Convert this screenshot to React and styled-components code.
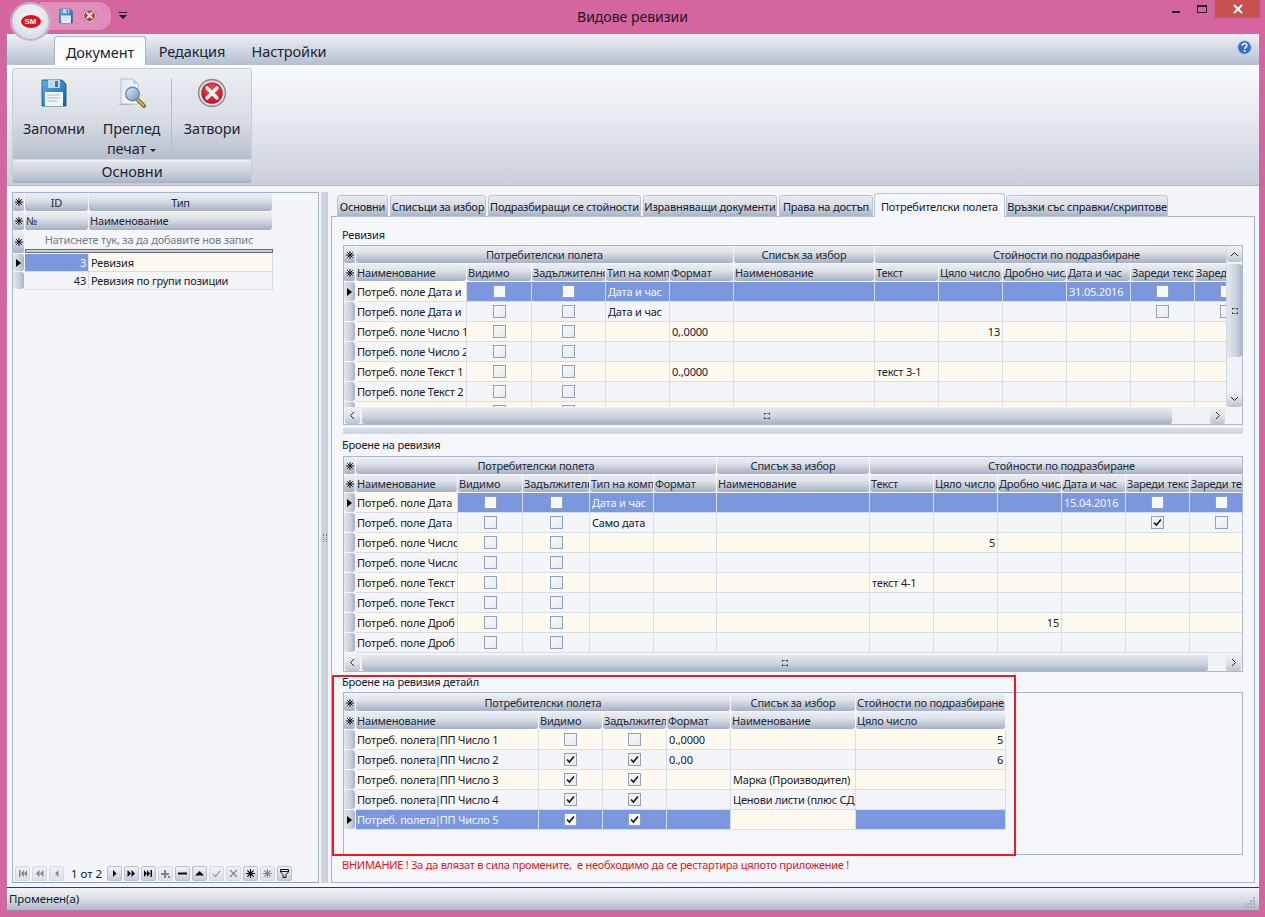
// Видове ревизии - document types window
import React from "react";
import styled, { createGlobalStyle } from "styled-components";

const GlobalStyle = createGlobalStyle`
  html, body { margin: 0; padding: 0; }
  body {
    font-family: "Noto Sans", "Liberation Sans", sans-serif;
    font-size: 11px;
    letter-spacing: -0.2px;
    color: #14202e;
  }
  * { box-sizing: border-box; }
`;

const headGradient = "linear-gradient(#eaedf2 0%, #dfe3ea 35%, #c0c8d5 70%, #a5b0c3 100%)";

const Screen = styled.div`
  width: 1265px;
  height: 917px;
  background: #d5659e;
  display: flex;
  flex-direction: column;
  position: relative;
  overflow: hidden;
`;

// Title bar
const TitleBar = styled.div`
  height: 34px;
  flex: none;
  display: grid;
  grid-template-columns: 1fr auto 1fr;
  align-items: start;
`;

const Title = styled.div`
  font-size: 14px;
  letter-spacing: 0;
  line-height: 34px;
  color: #20181c;
`;

const Orb = styled.div`
  position: absolute;
  left: 11px;
  top: 3px;
  width: 39px;
  height: 37px;
  border-radius: 50%;
  background: radial-gradient(circle at 50% 40%, #f6f6f8 0%, #e3e6eb 55%, #b9c2d2 100%);
  border: 1px solid #9fb0cc;
  box-shadow: 0 0 0 1px #e8a9c9;
  display: flex;
  align-items: center;
  justify-content: center;
  z-index: 2;
`;

const OrbMark = styled.div`
  width: 20px;
  height: 13px;
  border-radius: 50%;
  background: #d8141c;
  color: #fff;
  font: bold 8px/13px "Liberation Sans", sans-serif;
  letter-spacing: 0;
  text-align: center;
`;

const Qat = styled.div`
  display: flex;
  align-items: center;
  margin-left: 40px;
  height: 30px;
`;

const QatShelf = styled.div`
  width: 72px;
  height: 30px;
  margin-top: 1px;
  padding-left: 18px;
  display: flex;
  align-items: center;
  gap: 8px;
  background: #e08db9;
  border: 1px solid #c9649a;
  border-left: 0;
  border-radius: 0 13px 13px 0;
`;

const QatMore = styled.svg`
  width: 8px;
  height: 8px;
  margin-left: 7px;
  margin-top: 2px;
`;

const WinControls = styled.div`
  display: flex;
  justify-content: flex-end;
  align-items: flex-start;
  padding-right: 5px;
`;

const WinBtn = styled.div`
  width: ${(p) => p.$w}px;
  height: 18px;
  display: flex;
  align-items: center;
  justify-content: center;
  background: ${(p) => (p.$close ? "#c7524f" : "transparent")};
`;

const MinGlyph = styled.div`
  width: 8px;
  height: 2px;
  background: #222;
  margin-top: 5px;
`;

const MaxGlyph = styled.div`
  width: 10px;
  height: 8px;
  margin-top: -1px;
  border: 1px solid #222;
  border-top-width: 2px;
`;

// Window content
const Frame = styled.div`
  flex: 1;
  margin: 0 6px 7px 7px;
  background: #f3f5f8;
  display: flex;
  flex-direction: column;
  min-height: 0;
  box-shadow: 0 0 0 1px #a77fa0;
`;

const RibbonTabs = styled.div`
  height: 31px;
  flex: none;
  display: flex;
  align-items: flex-end;
  padding-left: 47px;
  padding-right: 7px;
  background: linear-gradient(#eff1f4, #b3bfcf);
`;

const RibbonTab = styled.div`
  width: ${(p) => p.$w}px;
  height: 29px;
  text-align: center;
  font-size: 14.5px;
  letter-spacing: -0.1px;
  line-height: 30px;
  color: #1c2530;
  border-radius: 3px 3px 0 0;
  ${(p) =>
    p.$active &&
    `background: linear-gradient(#f6f8fa, #fff); border: 1px solid #a6b6cc; border-bottom: 0;`}
`;

const HelpIcon = styled.svg`
  width: 15px;
  height: 15px;
  margin-left: auto;
  margin-bottom: 10px;
`;

const RibbonBody = styled.div`
  height: 121px;
  flex: none;
  padding: 3px 0 0 5px;
  background: linear-gradient(#fafbfc, #e6e9ee 45%, #c9d0da);
  border-bottom: 1px solid #a9b6c9;
`;

const RibbonGroup = styled.div`
  width: 240px;
  height: 116px;
  display: flex;
  flex-direction: column;
  border: 1px solid #c4ccd8;
  border-radius: 3px;
`;

const GroupButtons = styled.div`
  flex: 1;
  display: flex;
  padding-top: 9px;
  background: linear-gradient(#eceef2, #d9dee5 55%, #b5bfcd);
`;

const BigButton = styled.div`
  width: ${(p) => p.$w}px;
  flex: none;
  display: flex;
  flex-direction: column;
  align-items: center;
  font-size: 14.5px;
  letter-spacing: -0.15px;
  line-height: 20px;
  text-align: center;
  color: #1c2530;
`;

const BigIcon = styled.div`
  height: 38px;
  margin-bottom: 2px;
  display: flex;
  align-items: flex-start;
  justify-content: center;
`;

const Caret = styled.span`
  display: inline-block;
  margin-left: 4px;
  vertical-align: middle;
  border: 3px solid transparent;
  border-top-color: #222;
  border-bottom-width: 0;
`;

const GroupDivider = styled.div`
  width: 1px;
  height: 73px;
  flex: none;
  margin: 0 0 0 3px;
  background: #aebbcd;
`;

const GroupLabel = styled.div`
  height: 23px;
  flex: none;
  text-align: center;
  font-size: 14.5px;
  letter-spacing: -0.1px;
  line-height: 20px;
  color: #1c2530;
  margin-top: 1px;
  border-top: 1px solid #eef0f4;
  background: linear-gradient(#e2e6ec, #c6cdd9 60%, #a6b2c5);
`;

const Main = styled.div`
  flex: 1;
  min-height: 0;
  display: flex;
  padding: 6px 4px 4px 5px;
`;

const LeftPanel = styled.div`
  width: 307px;
  flex: none;
  display: flex;
  flex-direction: column;
  justify-content: space-between;
  border: 1px solid #a5b5ca;
  border-bottom-color: #8fa2bd;
`;

const Splitter = styled.div`
  width: 7px;
  flex: none;
  margin: 0 3px 0 2px;
  background: linear-gradient(90deg, #d3d9e2, #c6cedb);
  display: flex;
  align-items: center;
  justify-content: center;
`;

const SplitGrip = styled.div`
  width: 4px;
  height: 8px;
  border-left: 1px dotted #6f7f96;
  border-right: 1px dotted #6f7f96;
`;

const RightPanel = styled.div`
  flex: 1;
  min-width: 0;
  display: flex;
  flex-direction: column;
`;

const TabStrip = styled.div`
  height: 25px;
  flex: none;
  display: flex;
  align-items: flex-end;
  padding-left: 6px;
  gap: 1px;
  margin-bottom: -1px;
  position: relative;
  z-index: 1;
`;

const PageTab = styled.div`
  width: ${(p) => p.$w}px;
  flex: none;
  height: ${(p) => (p.$active ? 24 : 22)}px;
  margin-left: ${(p) => p.$gap || 0}px;
  line-height: ${(p) => (p.$active ? 25 : 22)}px;
  text-align: center;
  white-space: nowrap;
  overflow: hidden;
  border: 1px solid #b9c5d6;
  border-radius: 3px 3px 0 0;
  background: ${(p) => (p.$active ? "#f4f6f9" : "linear-gradient(#e9ecf1, #d6dbe4 50%, #a7b3c6)")};
  ${(p) => p.$active && "border-bottom: 0;"}
`;

const TabPage = styled.div`
  flex: 1;
  min-height: 0;
  padding: 10px 11px 0 11px;
  background: #f4f6f9;
  border: 1px solid #a3b3c9;
`;

const SectionLabel = styled.div`
  height: ${(p) => p.$h}px;
  line-height: ${(p) => p.$lh}px;
  margin-left: -1px;
`;

const SideSplit = styled.div`
  height: 6px;
  margin-top: 3px;
  background: linear-gradient(#dde2e9, #c8d0dc);
  border: 1px solid #d5dbe4;
`;

const GridFrame = styled.div`
  display: grid;
  grid-template-columns: minmax(0, 1fr) ${(p) => (p.$vscroll ? "16px" : "")};
  border: 1px solid #a9b8cc;
`;

const Viewport = styled.div`
  height: ${(p) => p.$h}px;
  overflow: hidden;
  min-width: 0;
`;

const GridRow = styled.div`
  display: grid;
  grid-template-columns: ${(p) => p.$cols};
  height: ${(p) => p.$h}px;
`;

const HeadCell = styled.div`
  grid-column: span ${(p) => p.$span || 1};
  padding: 0 1px;
  margin: 0 1px 1px 0;
  text-align: ${(p) => (p.$center ? "center" : "left")};
  line-height: ${(p) => p.$lh || 17}px;
  white-space: nowrap;
  overflow: hidden;
  border-radius: 3px;
  background: ${headGradient};
  color: #1c2a3a;
`;

const StarCell = styled.div`
  margin: 0 1px 1px 0;
  background: ${headGradient};
  border-radius: 2px;
  display: flex;
  align-items: center;
  justify-content: center;
`;

const Indicator = styled.div`
  margin: 0 1px 1px 0;
  border-radius: 3px;
  background: linear-gradient(90deg, #e3e7ed, #c7cfdb 60%, #a6b2c6);
  display: flex;
  align-items: center;
  justify-content: center;
`;

const Arrow = styled.span`
  border: 4px solid transparent;
  border-left: 5px solid #000;
  border-right-width: 0;
`;

const Cell = styled.div`
  padding: 0 2px 0 ${(p) => p.$pad}px;
  line-height: ${(p) => p.$h - 1}px;
  white-space: nowrap;
  overflow: hidden;
  text-align: ${(p) => p.$align || "left"};
  display: ${(p) => (p.$check ? "flex" : "block")};
  align-items: center;
  justify-content: center;
  border-right: 1px solid #d6dde7;
  border-bottom: 1px solid #d6dde7;
  background: ${(p) => (p.$focus ? "#fefaf0" : p.$selected ? "#7b97dd" : p.$odd ? "#fefaf0" : "#f3f5f8")};
  color: ${(p) => (p.$selected && !p.$focus ? "#f4f7ff" : "#14202e")};
`;

const Pipe = styled.span`
  margin: 0 -1px;
  color: ${(p) => (p.$selected ? "#d9cdea" : "#3f86d6")};
  font-weight: bold;
`;

const CheckBox = styled.div`
  width: 13px;
  height: 13px;
  flex: none;
  border: 1px solid #8ea2bd;
  background: ${(p) => (p.$selected ? "#f6f7f9" : "linear-gradient(135deg, #f7f8fa, #e6eaf0)")};
  display: flex;
  align-items: center;
  justify-content: center;
`;

const NewRowText = styled.div`
  grid-column: span 2;
  display: flex;
  flex-direction: column;
  margin-bottom: 1px;
  text-align: center;
  color: #6e7d8e;
  line-height: 17px;
`;

const NewRowLine = styled.div`
  height: 4px;
  margin-top: auto;
  border: 1px solid #666c74;
  background: #c9d0db;
`;

const Corner = styled.div`
  background: #f3f5f8;
`;

const VScroll = styled.div`
  display: flex;
  flex-direction: column;
  background: #eef1f5;
  border-left: 1px solid #d0d8e2;
`;

const VThumb = styled.div`
  height: 93px;
  margin: 2px 0 0;
  border-radius: 3px;
  background: linear-gradient(90deg, #e3e7ed, #ccd3de 60%, #a8b4c7);
  display: flex;
  align-items: center;
  justify-content: center;
`;

const VTrack = styled.div`
  flex: 1;
`;

const ScrollBtn = styled.div`
  flex: none;
  width: ${(p) => p.$w || 15}px;
  height: ${(p) => p.$h || 16}px;
  border-radius: 3px;
  display: flex;
  align-items: center;
  justify-content: center;
  background: linear-gradient(#eef0f4, #dde2e9 50%, #b9c3d2);
`;

const HScrollBar = styled.div`
  height: 17px;
  display: flex;
  align-items: center;
  padding: 0 1px;
  gap: 1px;
  background: #eef1f5;
`;

const HThumb = styled.div`
  flex: 1;
  height: 16px;
  margin-left: 1px;
  border-radius: 3px;
  background: linear-gradient(#e4e7ec, #ced5df 50%, #a6b2c5);
  display: flex;
  align-items: center;
  justify-content: center;
`;

const HTrack = styled.div`
  width: ${(p) => p.$w}px;
  flex: none;
`;

const GripIcon = styled.svg`
  width: 6px;
  height: 6px;
`;

const DetailSection = styled.div`
  position: relative;
`;

const DetailBox = styled.div`
  height: 163px;
  padding-top: 1px;
  border: 1px solid #a5b5ca;
`;

const DetailGrid = styled.div`
  width: 663px;
`;

const RedMark = styled.div`
  position: absolute;
  left: -11px;
  top: 3px;
  width: 684px;
  height: 181px;
  border: 2px solid #ed1c24;
  pointer-events: none;
`;

const Warning = styled.div`
  margin-left: -1px;
  line-height: 19px;
  letter-spacing: -0.25px;
  white-space: pre;
  color: #f0101c;
`;

const Nav = styled.div`
  display: flex;
  align-items: center;
  gap: 2px;
  padding: 0 0 1px 2px;
`;

const NavBtn = styled.div`
  width: 15px;
  height: 15px;
  border-radius: 2px;
  border: 1px solid ${(p) => (p.$off ? "#d3d9e2" : "#b3c0d2")};
  background: ${(p) => (p.$off ? "linear-gradient(#eef0f3, #dde1e8)" : "linear-gradient(#f0f2f5, #c6cedb)")};
  display: flex;
  align-items: center;
  justify-content: center;
`;

const NavCount = styled.div`
  width: 39px;
  padding-left: 5px;
  font-size: 11.5px;
  letter-spacing: 0;
  white-space: nowrap;
  color: #0c1830;
`;

const StatusBar = styled.div`
  height: 23px;
  flex: none;
  display: flex;
  align-items: center;
  justify-content: space-between;
  padding: 0 3px 2px 2px;
  border-top: 1px solid #2b3f63;
  background: linear-gradient(#f1f3f6, #d9dee6 50%, #aeb9c9);
  font-size: 11.5px;
  letter-spacing: -0.1px;
  color: #14202e;
`;

const StatusGrip = styled.svg`
  width: 12px;
  height: 12px;
  margin-top: 10px;
`;

// Drawings
const Star = () => (
  <svg width="8" height="8" viewBox="0 0 8 8" stroke="#111" strokeWidth="1">
    <path d="M4 0v8M0 4h8M1.200 1.200l5.600 5.600M6.800 1.200L1.200 6.800" />
  </svg>
);

const Tick = () => (
  <svg width="9" height="9" viewBox="0 0 9 9" fill="none" stroke="#111" strokeWidth="1.5">
    <path d="M1 4.500l2.400 2.600L8 1.600" />
  </svg>
);

const Grip = () => (
  <GripIcon viewBox="0 0 7 7" fill="#333">
    <path d="M0 0h3v1H1v1H0zM4 0h3v2H6V1H4zM0 5h1v1h2v1H0zM6 5h1v2H4V6h2z" />
  </GripIcon>
);

const Chevron = ({ d }) => (
  <svg width="9" height="9" viewBox="0 0 9 9" fill="none" stroke="#222" strokeWidth="1">
    <path d={d} />
  </svg>
);

const Floppy = ({ size }) => (
  <svg width={size} height={size} viewBox="0 0 28 30">
    <defs>
      <linearGradient id="floppyBody" x1="0" y1="0" x2="1" y2="1">
        <stop offset="0" stopColor="#5cb2e8" />
        <stop offset="1" stopColor="#12609e" />
      </linearGradient>
    </defs>
    <path d="M2 2h20l4 4v22H2z" fill="url(#floppyBody)" stroke="#124f85" strokeWidth=".8" />
    <path d="M8 2h12v8H8z" fill="#c2d6e6" />
    <path d="M15 3h3v6h-3z" fill="#3f79a8" />
    <path d="M5 14h18v14H5z" fill="#f1f4f6" />
    <path d="M7 17h13M7 20h13M7 23h10" stroke="#a9bccd" strokeWidth="1" />
  </svg>
);

const CloseBadge = ({ size }) => (
  <svg width={size} height={size} viewBox="0 0 30 30">
    <defs>
      <radialGradient id="closeRed" cx=".5" cy=".35" r=".7">
        <stop offset="0" stopColor="#f0505f" />
        <stop offset="1" stopColor="#b30d22" />
      </radialGradient>
    </defs>
    <circle cx="15" cy="15" r="14.200" fill="#8b8d90" />
    <circle cx="15" cy="15" r="12.600" fill="#e9e9ea" />
    <circle cx="15" cy="15" r="10.800" fill="url(#closeRed)" />
    <path d="M10 10l10 10M20 10L10 20" stroke="#fbf3f3" strokeWidth="3.600" strokeLinecap="round" />
  </svg>
);

const PreviewIcon = () => (
  <svg width="32" height="36" viewBox="0 0 32 36">
    <defs>
      <linearGradient id="lens" x1="0" y1="0" x2="1" y2="1">
        <stop offset="0" stopColor="#e4f0f8" />
        <stop offset="1" stopColor="#5b97c4" />
      </linearGradient>
      <linearGradient id="sheet" x1="0" y1="0" x2="1" y2="1">
        <stop offset="0" stopColor="#dfeaf5" />
        <stop offset="1" stopColor="#f8fafc" />
      </linearGradient>
    </defs>
    <path d="M1 27l9-2 5 2z" fill="#8f98a3" opacity=".6" />
    <path d="M5 1h12l5 5v20H5z" fill="url(#sheet)" stroke="#a3b6cb" strokeWidth=".8" />
    <path d="M17 1v5h5z" fill="#bcd0e4" />
    <path d="M21 21l7 7" stroke="#8a6c24" strokeWidth="4" strokeLinecap="round" />
    <path d="M21.500 21.500l6 6" stroke="#e2c56c" strokeWidth="1.500" strokeLinecap="round" />
    <circle cx="16.500" cy="16" r="6.800" fill="url(#lens)" stroke="#76889a" strokeWidth="1.400" />
  </svg>
);

// Navigator glyphs: 9x9 black shapes, one per button
const navGlyphs = {
  first: "M1 1h1.500v7H1zM6 1v7L3 4.500zM9 1v7L6 4.500z",
  prevPage: "M4.500 1v7L1 4.500zM8.500 1v7L5 4.500z",
  prev: "M6.500 1v7L3 4.500z",
  next: "M3 1v7l3.500-3.500z",
  nextPage: "M.5 1v7L4 4.500zM4.500 1v7L8 4.500z",
  last: "M0 1v7l3-3.500zM3 1v7l3-3.500zM6.500 1H8v7H6.500z",
  plus: "M3 1h2v3h3v2H5v3H3V6H0V4h3zM7 7h2v2H7z",
  minus: "M0 3.500h9v2H0z",
  up: "M4.500 2L9 6.500H0z",
  star: "M4 0h1v3l2.300-2 .7.7L6 4h3v1H6l2 2.300-.7.7L5 6v3H4V6L1.700 8 1 7.300 3 5H0V4h3L1 1.700 1.700 1 4 3z",
};

const NavButton = ({ glyph, off }) => (
  <NavBtn $off={off}>
    <svg width="9" height="9" viewBox="0 0 9 9" fill={off ? "#7c8794" : "#0a0a0a"}>
      {glyph === "check" && <path d="M1 5l2.500 2.500L8 2" fill="none" stroke="#98a3b0" strokeWidth="1.200" />}
      {glyph === "cancel" && <path d="M1 1l7 7M8 1L1 8" fill="none" stroke="#7c8794" strokeWidth="1.200" />}
      {glyph === "filter" && <path d="M.5.5h8v2.500L6 5.500v3H3v-3L.5 3zM1 2.500h7" fill="none" stroke="#111" strokeWidth="1" />}
      {navGlyphs[glyph] && <path d={navGlyphs[glyph]} />}
    </svg>
  </NavBtn>
);

const navButtons = [
  ["next"],
  ["nextPage"],
  ["last"],
  ["plus", true],
  ["minus"],
  ["up"],
  ["check", true],
  ["cancel", true],
  ["star"],
  ["star", true],
  ["filter"],
];

// Data grid driven by column definitions
const renderValue = (col, value, selected) => {
  if (col.type === "check") {
    if (value === null || value === undefined) return null;
    return <CheckBox $selected={selected}>{value === 1 && <Tick />}</CheckBox>;
  }
  if (col.type === "pipe") {
    const [a, b] = value.split("|");
    return (
      <>
        {a}
        <Pipe $selected={selected}>|</Pipe>
        {b}
      </>
    );
  }
  return value;
};

const DataRows = ({ columns, template, rows, selected, focusCol, height = 20 }) =>
  rows.map((row, r) => {
    const isSel = r === selected;
    return (
      <GridRow key={r} $cols={template} $h={height}>
        <Indicator>{isSel && <Arrow />}</Indicator>
        {columns.map((col, c) => (
          <Cell
            key={c}
            $h={height}
            $pad={c === 0 ? 1 : 2}
            $align={col.align}
            $check={col.type === "check"}
            $odd={r % 2 === 0}
            $selected={isSel}
            $focus={isSel && c === focusCol}
          >
            {renderValue(col, row[c], isSel)}
          </Cell>
        ))}
      </GridRow>
    );
  });

const GridHead = ({ columns, template, bands }) => (
  <>
    <GridRow $cols={template} $h={18}>
      <StarCell>
        <Star />
      </StarCell>
      {bands.map((b) => (
        <HeadCell key={b.title} $span={b.span} $center>
          {b.title}
        </HeadCell>
      ))}
    </GridRow>
    <GridRow $cols={template} $h={18}>
      <StarCell>
        <Star />
      </StarCell>
      {columns.map((c, i) => (
        <HeadCell key={i}>{c.title}</HeadCell>
      ))}
    </GridRow>
  </>
);

const makeTemplate = (columns) => `12px ${columns.map((c) => `${c.w}px`).join(" ")}`;

const HScroll = ({ track }) => (
  <HScrollBar>
    <ScrollBtn>
      <Chevron d="M6 1L2.500 4.500 6 8" />
    </ScrollBtn>
    <HThumb>
      <Grip />
    </HThumb>
    <HTrack $w={track} />
    <ScrollBtn>
      <Chevron d="M3 1l3.500 3.500L3 8" />
    </ScrollBtn>
  </HScrollBar>
);

const col = (title, w, extra) => ({ title, w, ...extra });
const CHECK = { type: "check", align: "center" };
const RIGHT = { align: "right" };

const bands = (a, b, c) => [
  { title: "Потребителски полета", span: a },
  { title: "Списък за избор", span: b },
  { title: "Стойности по подразбиране", span: c },
];

const revColumns = [
  col("Наименование", 111),
  col("Видимо", 65, CHECK),
  col("Задължително", 74, CHECK),
  col("Тип на компонента", 64),
  col("Формат", 64),
  col("Наименование", 141),
  col("Текст", 64),
  col("Цяло число", 64, RIGHT),
  col("Дробно число", 64, RIGHT),
  col("Дата и час", 64),
  col("Зареди текст", 64, CHECK),
  col("Зареди текст", 64, CHECK),
];

const revRows = [
  ["Потреб. поле Дата и", 0, 0, "Дата и час", "", "", "", "", "", "31.05.2016", 0, 0],
  ["Потреб. поле Дата и", 0, 0, "Дата и час", "", "", "", "", "", "", 0, 0],
  ["Потреб. поле Число 1", 0, 0, "", "0,.0000", "", "", "13", "", "", null, null],
  ["Потреб. поле Число 2", 0, 0, "", "", "", "", "", "", "", null, null],
  ["Потреб. поле Текст 1", 0, 0, "", "0.,0000", "", "текст 3-1", "", "", "", null, null],
  ["Потреб. поле Текст 2", 0, 0, "", "", "", "", "", "", "", null, null],
  ["Потреб. поле Дробно 1", 0, 0, "", "", "", "", "", "", "", null, null],
];

const countColumns = [
  col("Наименование", 102),
  col("Видимо", 65, CHECK),
  col("Задължително", 67, CHECK),
  col("Тип на компонента", 64),
  col("Формат", 63),
  col("Наименование", 153),
  col("Текст", 64),
  col("Цяло число", 64, RIGHT),
  col("Дробно число", 64, RIGHT),
  col("Дата и час", 64),
  col("Зареди текст", 64, CHECK),
  col("Зареди текст", 64, CHECK),
];

const countRows = [
  ["Потреб. поле Дата", 0, 0, "Дата и час", "", "", "", "", "", "15.04.2016", 0, 0],
  ["Потреб. поле Дата", 0, 0, "Само дата", "", "", "", "", "", "", 1, 0],
  ["Потреб. поле Число", 0, 0, "", "", "", "", "5", "", "", null, null],
  ["Потреб. поле Число", 0, 0, "", "", "", "", "", "", "", null, null],
  ["Потреб. поле Текст", 0, 0, "", "", "", "текст 4-1", "", "", "", null, null],
  ["Потреб. поле Текст", 0, 0, "", "", "", "", "", "", "", null, null],
  ["Потреб. поле Дроб", 0, 0, "", "", "", "", "", "15", "", null, null],
  ["Потреб. поле Дроб", 0, 0, "", "", "", "", "", "", "", null, null],
];

const detailColumns = [
  col("Наименование", 183, { type: "pipe" }),
  col("Видимо", 64, CHECK),
  col("Задължително", 64, CHECK),
  col("Формат", 64),
  col("Наименование", 125),
  col("Цяло число", 150, RIGHT),
];

const detailRows = [
  ["Потреб. полета|ПП Число 1", 0, 0, "0.,0000", "", "5"],
  ["Потреб. полета|ПП Число 2", 1, 1, "0.,00", "", "6"],
  ["Потреб. полета|ПП Число 3", 1, 1, "", "Марка (Производител)", ""],
  ["Потреб. полета|ПП Число 4", 1, 1, "", "Ценови листи (плюс СД", ""],
  ["Потреб. полета|ПП Число 5", 1, 1, "", "", ""],
];

const typeColumns = [col("№", 64, RIGHT), col("Наименование", 184)];
const typeRows = [
  ["3", "Ревизия"],
  ["43", "Ревизия по групи позиции"],
];

const pageTabs = [
  ["Основни", 51],
  ["Списъци за избор", 96, 1],
  ["Подразбиращи се стойности", 153, 1],
  ["Изравняващи документи", 134, 1],
  ["Права на достъп", 94, 1],
  ["Потребителски полета", 131, 0, true],
  ["Връзки със справки/скриптове", 162],
];

const typeTemplate = makeTemplate(typeColumns);

const App = () => (
  <Screen>
    <GlobalStyle />
    <Orb>
      <OrbMark>SM</OrbMark>
    </Orb>
    <TitleBar>
      <Qat>
        <QatShelf>
          <Floppy size={16} />
          <CloseBadge size={15} />
        </QatShelf>
        <QatMore viewBox="0 0 8 8" fill="#111">
          <path d="M0 0h8v1H0zM0 3h8L4 7z" />
        </QatMore>
      </Qat>
      <Title>Видове ревизии</Title>
      <WinControls>
        <WinBtn $w={26}>
          <MinGlyph />
        </WinBtn>
        <WinBtn $w={26}>
          <MaxGlyph />
        </WinBtn>
        <WinBtn $w={45} $close>
          <svg width="10" height="10" viewBox="0 0 10 10" stroke="#fff" strokeWidth="2">
            <path d="M1 1l8 8M9 1L1 9" />
          </svg>
        </WinBtn>
      </WinControls>
    </TitleBar>

    <Frame>
      <RibbonTabs>
        <RibbonTab $w={92} $active>
          Документ
        </RibbonTab>
        <RibbonTab $w={92}>Редакция</RibbonTab>
        <RibbonTab $w={102}>Настройки</RibbonTab>
        <HelpIcon viewBox="0 0 15 15">
          <circle cx="7.500" cy="7.500" r="6.800" fill="#2f6fd0" stroke="#a9c4ec" strokeWidth="1" />
          <path d="M5.300 5.800c0-3 4.600-3 4.600-.3 0 1.800-2.300 1.800-2.300 3.400" fill="none" stroke="#fff" strokeWidth="1.500" />
          <circle cx="7.600" cy="11" r="1" fill="#fff" />
        </HelpIcon>
      </RibbonTabs>

      <RibbonBody>
        <RibbonGroup>
          <GroupButtons>
            <BigButton $w={82}>
              <BigIcon>
                <Floppy size={30} />
              </BigIcon>
              Запомни
            </BigButton>
            <BigButton $w={73}>
              <BigIcon>
                <PreviewIcon />
              </BigIcon>
              Преглед
              <span>
                печат
                <Caret />
              </span>
            </BigButton>
            <GroupDivider />
            <BigButton $w={80}>
              <BigIcon>
                <CloseBadge size={30} />
              </BigIcon>
              Затвори
            </BigButton>
          </GroupButtons>
          <GroupLabel>Основни</GroupLabel>
        </RibbonGroup>
      </RibbonBody>

      <Main>
        <LeftPanel>
          <div>
            <GridRow $cols={typeTemplate} $h={19}>
              <StarCell>
                <Star />
              </StarCell>
              <HeadCell $center $lh={19}>
                ID
              </HeadCell>
              <HeadCell $center $lh={19}>
                Тип
              </HeadCell>
            </GridRow>
            <GridRow $cols={typeTemplate} $h={19}>
              <StarCell>
                <Star />
              </StarCell>
              <HeadCell>№</HeadCell>
              <HeadCell>Наименование</HeadCell>
            </GridRow>
            <GridRow $cols={typeTemplate} $h={23}>
              <StarCell>
                <Star />
              </StarCell>
              <NewRowText>
                Натиснете тук, за да добавите нов запис
                <NewRowLine />
              </NewRowText>
            </GridRow>
            <DataRows columns={typeColumns} template={typeTemplate} rows={typeRows} selected={0} focusCol={1} height={18} />
          </div>
          <Nav>
            <NavButton glyph="first" off />
            <NavButton glyph="prevPage" off />
            <NavButton glyph="prev" off />
            <NavCount>1 от 2</NavCount>
            {navButtons.map(([glyph, off], i) => (
              <NavButton key={i} glyph={glyph} off={off} />
            ))}
          </Nav>
        </LeftPanel>

        <Splitter>
          <SplitGrip />
        </Splitter>

        <RightPanel>
          <TabStrip>
            {pageTabs.map(([title, w, gap, active]) => (
              <PageTab key={title} $w={w} $gap={gap} $active={active}>
                {title}
              </PageTab>
            ))}
          </TabStrip>
          <TabPage>
            <SectionLabel $h={18} $lh={16}>
              Ревизия
            </SectionLabel>
            <GridFrame $vscroll>
              <Viewport $h={161}>
                <GridHead columns={revColumns} template={makeTemplate(revColumns)} bands={bands(5, 1, 6)} />
                <DataRows columns={revColumns} template={makeTemplate(revColumns)} rows={revRows} selected={0} focusCol={0} />
              </Viewport>
              <VScroll>
                <ScrollBtn $h={16}>
                  <Chevron d="M1 6l3.500-3.500L8 6" />
                </ScrollBtn>
                <VThumb>
                  <Grip />
                </VThumb>
                <VTrack />
                <ScrollBtn $h={17}>
                  <Chevron d="M1 3l3.500 3.500L8 3" />
                </ScrollBtn>
              </VScroll>
              <HScroll track={36} />
              <Corner />
            </GridFrame>
            <SideSplit />

            <SectionLabel $h={22} $lh={22}>
              Броене на ревизия
            </SectionLabel>
            <GridFrame>
              <Viewport $h={197}>
                <GridHead columns={countColumns} template={makeTemplate(countColumns)} bands={bands(5, 1, 6)} />
                <DataRows columns={countColumns} template={makeTemplate(countColumns)} rows={countRows} selected={0} focusCol={0} />
              </Viewport>
              <HScroll track={16} />
            </GridFrame>

            <DetailSection>
              <SectionLabel $h={20} $lh={20}>
                Броене на ревизия детайл
              </SectionLabel>
              <DetailBox>
                <DetailGrid>
                  <GridHead columns={detailColumns} template={makeTemplate(detailColumns)} bands={bands(4, 1, 1)} />
                  <DataRows columns={detailColumns} template={makeTemplate(detailColumns)} rows={detailRows} selected={4} focusCol={4} />
                </DetailGrid>
              </DetailBox>
              <RedMark />
            </DetailSection>
            <Warning>ВНИМАНИЕ ! За да влязат в сила промените,  е необходимо да се рестартира цялото приложение !</Warning>
          </TabPage>
        </RightPanel>
      </Main>

      <StatusBar>
        Променен(а)
        <StatusGrip viewBox="0 0 12 12" fill="#a3adbb">
          <path d="M9 0h2v2H9zM6 3h2v2H6zM9 3h2v2H9zM3 6h2v2H3zM6 6h2v2H6zM9 6h2v2H9zM0 9h2v2H0zM3 9h2v2H3zM6 9h2v2H6zM9 9h2v2H9z" />
        </StatusGrip>
      </StatusBar>
    </Frame>
  </Screen>
);

export default App;
